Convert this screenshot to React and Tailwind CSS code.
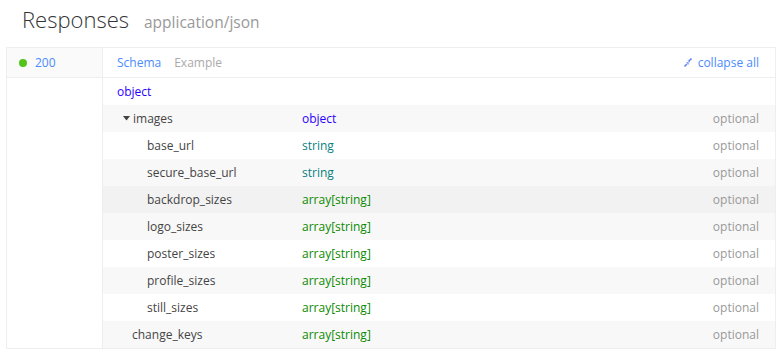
import React from "react";

const rows = [
  { name: "images", type: "object", depth: 0, caret: true },
  { name: "base_url", type: "string", depth: 1 },
  { name: "secure_base_url", type: "string", depth: 1 },
  { name: "backdrop_sizes", type: "array[string]", depth: 1, hover: true },
  { name: "logo_sizes", type: "array[string]", depth: 1 },
  { name: "poster_sizes", type: "array[string]", depth: 1 },
  { name: "profile_sizes", type: "array[string]", depth: 1 },
  { name: "still_sizes", type: "array[string]", depth: 1 },
  { name: "change_keys", type: "array[string]", depth: 0 },
];

const typeColor = {
  object: "text-[#2a00ff]",
  string: "text-[#0a7f7f]",
  "array[string]": "text-[#0b8a00]",
};

// two little arrows pointing in to the middle of the diagonal
function CollapseIcon() {
  return (
    <svg width="8" height="9" viewBox="0 0 8 9" className="mr-[6px]">
      <path d="M0.5 8.5 L3 6" stroke="#6a86f5" strokeWidth="1.6" />
      <path d="M2 4.2 L4.6 4.2 L4.6 6.8 Z" fill="#6a86f5" />
      <path d="M7.5 0.5 L5 3" stroke="#6a86f5" strokeWidth="1.6" />
      <path d="M3.4 2.4 L5.8 2.4 L5.8 4.8 Z" fill="#6a86f5" />
    </svg>
  );
}

export default function App() {
  return (
    <div
      className="h-[357px] w-[780px] bg-white"
      style={{ fontFamily: '"Open Sans", sans-serif' }}
    >
      <div className="flex items-baseline pl-[22px] pt-[3px] h-[47px]">
        <h2 className="text-[22px] font-light text-[#333]">Responses</h2>
        <span className="ml-[15px] text-[15.5px] text-[#999]">application/json</span>
      </div>

      <div className="ml-[6px] flex w-[770px] border border-[#eeeeee]">
        <div className="w-[96px] shrink-0 border-r border-[#eeeeee]">
          <div className="flex h-[30px] items-center border-b border-[#eeeeee] bg-[#fafafa] pl-[12px] text-[12px]">
            <span className="mr-[8px] h-[8px] w-[8px] rounded-full bg-[#52c41a]" />
            <span className="text-[#4b8bfd]">200</span>
          </div>
        </div>

        <div className="flex-1 text-[12px]">
          <div className="flex h-[30px] items-center justify-between border-b border-[#eeeeee] pl-[14px] pr-[16px]">
            <div className="flex gap-[13px]">
              <span className="text-[#4b8bfd]">Schema</span>
              <span className="text-[#aaaaaa]">Example</span>
            </div>
            <div className="flex items-center text-[#4b8bfd]">
              <CollapseIcon />
              collapse all
            </div>
          </div>

          <div className="flex h-[27px] items-center pl-[14px] text-[#2a00ff]">object</div>

          {rows.map((r, i) => (
            <div
              key={r.name}
              className={
                "flex h-[27px] items-center pr-[16px] " +
                (r.hover ? "bg-[#f2f2f2]" : i % 2 === 0 ? "bg-[#f8f8f8]" : "bg-white")
              }
            >
              <div
                className={
                  "flex w-[199px] shrink-0 items-center text-[#444] " +
                  (r.depth === 1 ? "pl-[44px]" : r.caret ? "pl-[20px]" : "pl-[29px]")
                }
              >
                {r.caret && (
                  <svg width="7" height="5" viewBox="0 0 7 5" className="mr-[3px]">
                    <path d="M0 0 L7 0 L3.5 4.5 Z" fill="#444" />
                  </svg>
                )}
                {r.name}
              </div>
              <div className={"flex-1 " + typeColor[r.type]}>{r.type}</div>
              <div className="text-[#999]">optional</div>
            </div>
          ))}
        </div>
      </div>
    </div>
  );
}
